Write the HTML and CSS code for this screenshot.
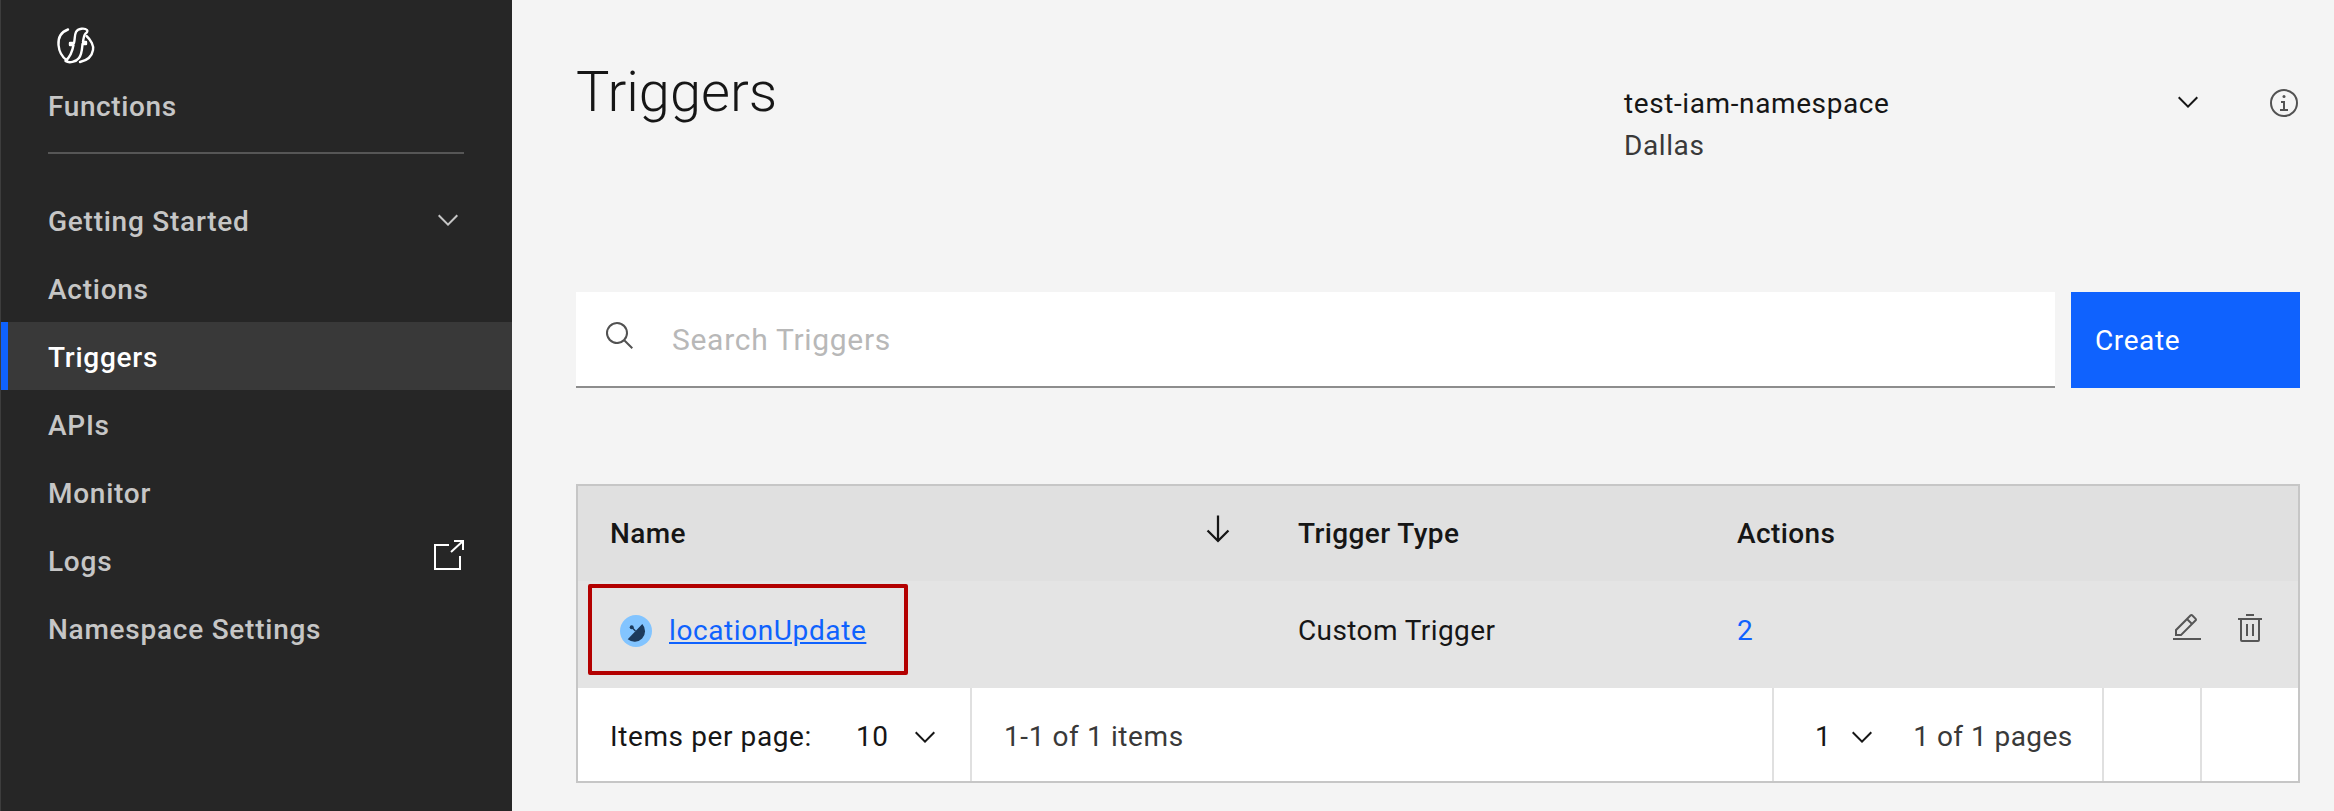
FILE: index.html
```html
<!DOCTYPE html>
<html lang="en">
<head>
    <meta charset="UTF-8">
    <meta name="viewport" content="width=device-width, initial-scale=1.0">
    <title>Triggers</title>
    <link rel="stylesheet" href="styles.css">
</head>
<body>
    <aside class="sidebar">
        <svg class="logo" viewBox="0 0 48 48" fill="none" stroke="#fff" stroke-width="2.4" stroke-linecap="round" stroke-linejoin="round">
            <path d="M16 7.5C9 10 6 16 6.5 23C7 29 10 35 15 38.5"/>
            <path d="M34.5 14C39 18 42 24 41 28C40 34 35 38.5 28 40"/>
            <path d="M35 8C33 6 26 6 24 10C22.5 13 23 17 22 21H18V23H21.5C20.5 29 18 35 13.5 39C17 41.5 24 40 27 36C30 32 30 27 30.5 22H34V20H31C31.5 16 32 13 33.5 11.5C35 10.5 36 9 35 8Z"/>
        </svg>
        <div class="product">Functions</div>
        <nav class="menu">
            <a class="menu-item">Getting Started
                <svg class="icon" viewBox="0 0 32 32" fill="#c6c6c6"><path d="M16 22 6 12l1.4-1.4 8.6 8.6 8.6-8.6L26 12z"/></svg>
            </a>
            <a class="menu-item">Actions</a>
            <a class="menu-item active">Triggers</a>
            <a class="menu-item">APIs</a>
            <a class="menu-item">Monitor</a>
            <a class="menu-item">Logs
                <svg class="launch" viewBox="0 0 30 30" fill="none" stroke="#fff" stroke-width="2"><path d="M15 5H1V29H26V16"/><path d="M17 12L29 1M20 1H29V10"/></svg>
            </a>
            <a class="menu-item">Namespace Settings</a>
        </nav>
    </aside>

    <main class="content">
        <header class="page-head">
            <h1>Triggers</h1>
            <div class="namespace">
                <div class="namespace-text">
                    <div class="namespace-name">test-iam-namespace</div>
                    <div class="namespace-region">Dallas</div>
                </div>
                <svg class="icon" viewBox="0 0 32 32" fill="#161616"><path d="M16 22 6 12l1.4-1.4 8.6 8.6 8.6-8.6L26 12z"/></svg>
            </div>
            <svg class="icon info" viewBox="0 0 32 32" fill="#525252"><path d="M17 22v-8h-4v2h2v6h-3v2h8v-2h-3z"/><path d="M16 8a1.5 1.5 0 1 0 1.5 1.5A1.5 1.5 0 0 0 16 8z"/><path d="M16 30a14 14 0 1 1 14-14 14 14 0 0 1-14 14zm0-26a12 12 0 1 0 12 12A12 12 0 0 0 16 4z"/></svg>
        </header>

        <div class="toolbar">
            <div class="search">
                <svg class="icon" viewBox="0 0 32 32" fill="#525252"><path d="m29 27.586-7.552-7.552a11.018 11.018 0 1 0-1.414 1.414L27.586 29ZM4 13a9 9 0 1 1 9 9 9.01 9.01 0 0 1-9-9Z"/></svg>
                <span class="placeholder">Search Triggers</span>
            </div>
            <button class="create" type="button">Create</button>
        </div>

        <div class="table">
            <div class="row head">
                <div class="col-name">Name
                    <svg class="sort" viewBox="0 0 32 32" fill="#161616"><path d="M24.59 16.59 17 24.17V4h-2v20.17l-7.59-7.58L6 18l10 10 10-10-1.41-1.41z"/></svg>
                </div>
                <div class="col-type">Trigger Type</div>
                <div class="col-actions">Actions</div>
            </div>
            <div class="row body">
                <div class="col-name">
                    <svg class="trigger-icon" viewBox="0 0 32 32"><circle cx="16" cy="16" r="16" fill="#82c4ff"/><path d="M7.7 24.3 22.3 9A10.6 10.6 0 0 1 7.7 24.3Z" fill="#1c3a5c"/><path d="M11.7 12.3 15.5 16" stroke="#1c3a5c" stroke-width="1.5"/><circle cx="11.7" cy="12.3" r="2" fill="#1c3a5c"/></svg>
                    <a class="link">locationUpdate</a>
                </div>
                <div class="col-type">Custom Trigger</div>
                <div class="col-actions">
                    <span class="count">2</span>
                    <svg class="icon edit" viewBox="0 0 32 32" fill="#565656"><path d="M2 26h28v2H2z"/><path d="M25.4 9c.8-.8.8-2 0-2.8l-3.6-3.6c-.8-.8-2-.8-2.8 0l-15 15V24h6.4l15-15zm-5-5L24 7.6l-3 3L17.4 7l3-3zM6 22v-3.6l10-10 3.6 3.6-10 10H6z"/></svg>
                    <svg class="icon" viewBox="0 0 32 32" fill="#565656"><path d="M12 12h2v12h-2zM18 12h2v12h-2z"/><path d="M4 6v2h2v20a2 2 0 0 0 2 2h16a2 2 0 0 0 2-2V8h2V6zm4 22V8h16v20z"/><path d="M12 2h8v2h-8z"/></svg>
                </div>
                <div class="highlight"></div>
            </div>
            <div class="pager">
                <div class="pager-size">
                    <span>Items per page:</span>
                    <span class="pager-value">10</span>
                    <svg class="icon" viewBox="0 0 32 32" fill="#161616"><path d="M16 22 6 12l1.4-1.4 8.6 8.6 8.6-8.6L26 12z"/></svg>
                </div>
                <div class="pager-count">1-1 of 1 items</div>
                <div class="pager-pages">
                    <span class="pager-value">1</span>
                    <svg class="icon" viewBox="0 0 32 32" fill="#161616"><path d="M16 22 6 12l1.4-1.4 8.6 8.6 8.6-8.6L26 12z"/></svg>
                    <span class="pager-total">1 of 1 pages</span>
                </div>
                <div class="pager-btn"></div>
                <div class="pager-btn"></div>
            </div>
        </div>
    </main>
</body>
</html>
```

FILE: styles.css
```css
* {
    box-sizing: border-box;
}
body {
    margin: 0;
    height: 811px;
    overflow: hidden;
    display: flex;
    font-family: Roboto, "Noto Sans", sans-serif;
    font-size: 28px;
    letter-spacing: 0.6px;
    color: #161616;
    background: #f4f4f4;
}
.icon {
    width: 32px;
    height: 32px;
    flex: none;
}

/* sidebar */
.sidebar {
    width: 512px;
    flex: none;
    background: #262626;
    border-left: 1px solid #3d3d3d;
    color: #c6c6c6;
    font-weight: 500;
}
.logo {
    display: block;
    width: 48px;
    height: 48px;
    margin: 22px 0 0 51px;
}
.product {
    margin: 20px 48px 0 47px;
    padding-bottom: 28px;
    line-height: 34px;
    border-bottom: 2px solid #565656;
}
.menu {
    margin-top: 32px;
}
.menu-item {
    height: 68px;
    display: flex;
    align-items: center;
    justify-content: space-between;
    padding: 3px 48px 0 47px;
    letter-spacing: 0.75px;
}
.menu-item .icon {
    margin-top: -3px;
}
.menu-item.active {
    background: #393939;
    border-left: 7px solid #0f62fe;
    padding-left: 40px;
    color: #fff;
}
.launch {
    width: 30px;
    height: 30px;
    margin-top: -13px;
}

/* page header */
.content {
    flex: 1;
    padding: 0 34px 0 64px;
}
.page-head {
    display: flex;
    height: 292px;
    align-items: flex-start;
}
h1 {
    margin: 58px 0 0;
    width: 1048px;
    font-size: 56px;
    font-weight: 300;
    line-height: 68px;
    letter-spacing: 0;
}
.namespace {
    display: flex;
    width: 644px;
    padding-top: 84px;
    padding-right: 64px;
    justify-content: space-between;
}
.namespace .icon {
    margin-top: 2px;
}
.namespace-name {
    line-height: 40px;
}
.namespace-region {
    margin-top: 2px;
    line-height: 40px;
    color: #393939;
}
.info {
    margin-top: 87px;
}

/* search row */
.toolbar {
    display: flex;
    gap: 16px;
    height: 96px;
}
.search {
    width: 1479px;
    display: flex;
    align-items: center;
    gap: 36px;
    padding: 0 30px 0 28px;
    background: #fff;
    border-bottom: 2px solid #8d8d8d;
}
.search .icon {
    margin-top: -6px;
}
.placeholder {
    font-size: 30px;
    letter-spacing: 0.7px;
    color: #b8b8b8;
}
.create {
    width: 229px;
    padding: 0 0 0 24px;
    border: 0;
    text-align: left;
    font: inherit;
    letter-spacing: inherit;
    color: #fff;
    background: #0f62fe;
}

/* table */
.table {
    margin-top: 96px;
    width: 1724px;
    border: 2px solid #c6c6c6;
}
.row {
    position: relative;
    display: flex;
    align-items: center;
}
.row.head {
    height: 95px;
    background: #e0e0e0;
    font-weight: 500;
    letter-spacing: 0.4px;
}
.row.body {
    height: 107px;
    padding-bottom: 8px;
    background: #e4e4e4;
    letter-spacing: 0.4px;
}
.col-name {
    width: 720px;
    padding-left: 32px;
    display: flex;
    align-items: center;
}
.col-type {
    width: 439px;
}
.col-actions {
    flex: 1;
    display: flex;
    align-items: center;
}
.sort {
    width: 36px;
    height: 36px;
    margin-left: auto;
    margin-right: 62px;
    margin-top: -10px;
}
.trigger-icon {
    width: 32px;
    height: 32px;
    margin-right: 17px;
}
.row.body .col-name {
    padding-left: 42px;
}
.link {
    color: #0f62fe;
    text-decoration: underline;
    letter-spacing: 0.6px;
}
.count {
    color: #0f62fe;
    margin-right: auto;
}
.edit {
    margin-right: 31px;
}
.col-actions .icon {
    margin-top: -6px;
}
.col-actions .icon:last-child {
    margin-right: 32px;
}
.highlight {
    position: absolute;
    left: 10px;
    top: 3px;
    width: 320px;
    height: 91px;
    border: 4px solid #b30000;
    border-radius: 2px;
}

/* pagination */
.pager {
    height: 93px;
    display: flex;
    background: #fff;
    color: #161616;
}
.pager > div {
    display: flex;
    align-items: center;
    padding-top: 4px;
    border-right: 2px solid #e0e0e0;
}
.pager-size {
    width: 394px;
    padding-left: 32px;
}
.pager-size .pager-value {
    margin-left: 44px;
}
.pager-size .icon {
    margin-left: 20px;
}
.pager-count {
    width: 802px;
    padding-left: 32px;
    color: #393939;
}
.pager-pages {
    width: 330px;
    padding-left: 41px;
}
.pager-pages .icon {
    margin-left: 15px;
}
.pager-total {
    margin-left: 35px;
    letter-spacing: 0.45px;
    color: #393939;
}
.pager-btn {
    width: 98px;
}
.pager > .pager-btn:last-child {
    flex: 1;
    border-right: 0;
}
```
